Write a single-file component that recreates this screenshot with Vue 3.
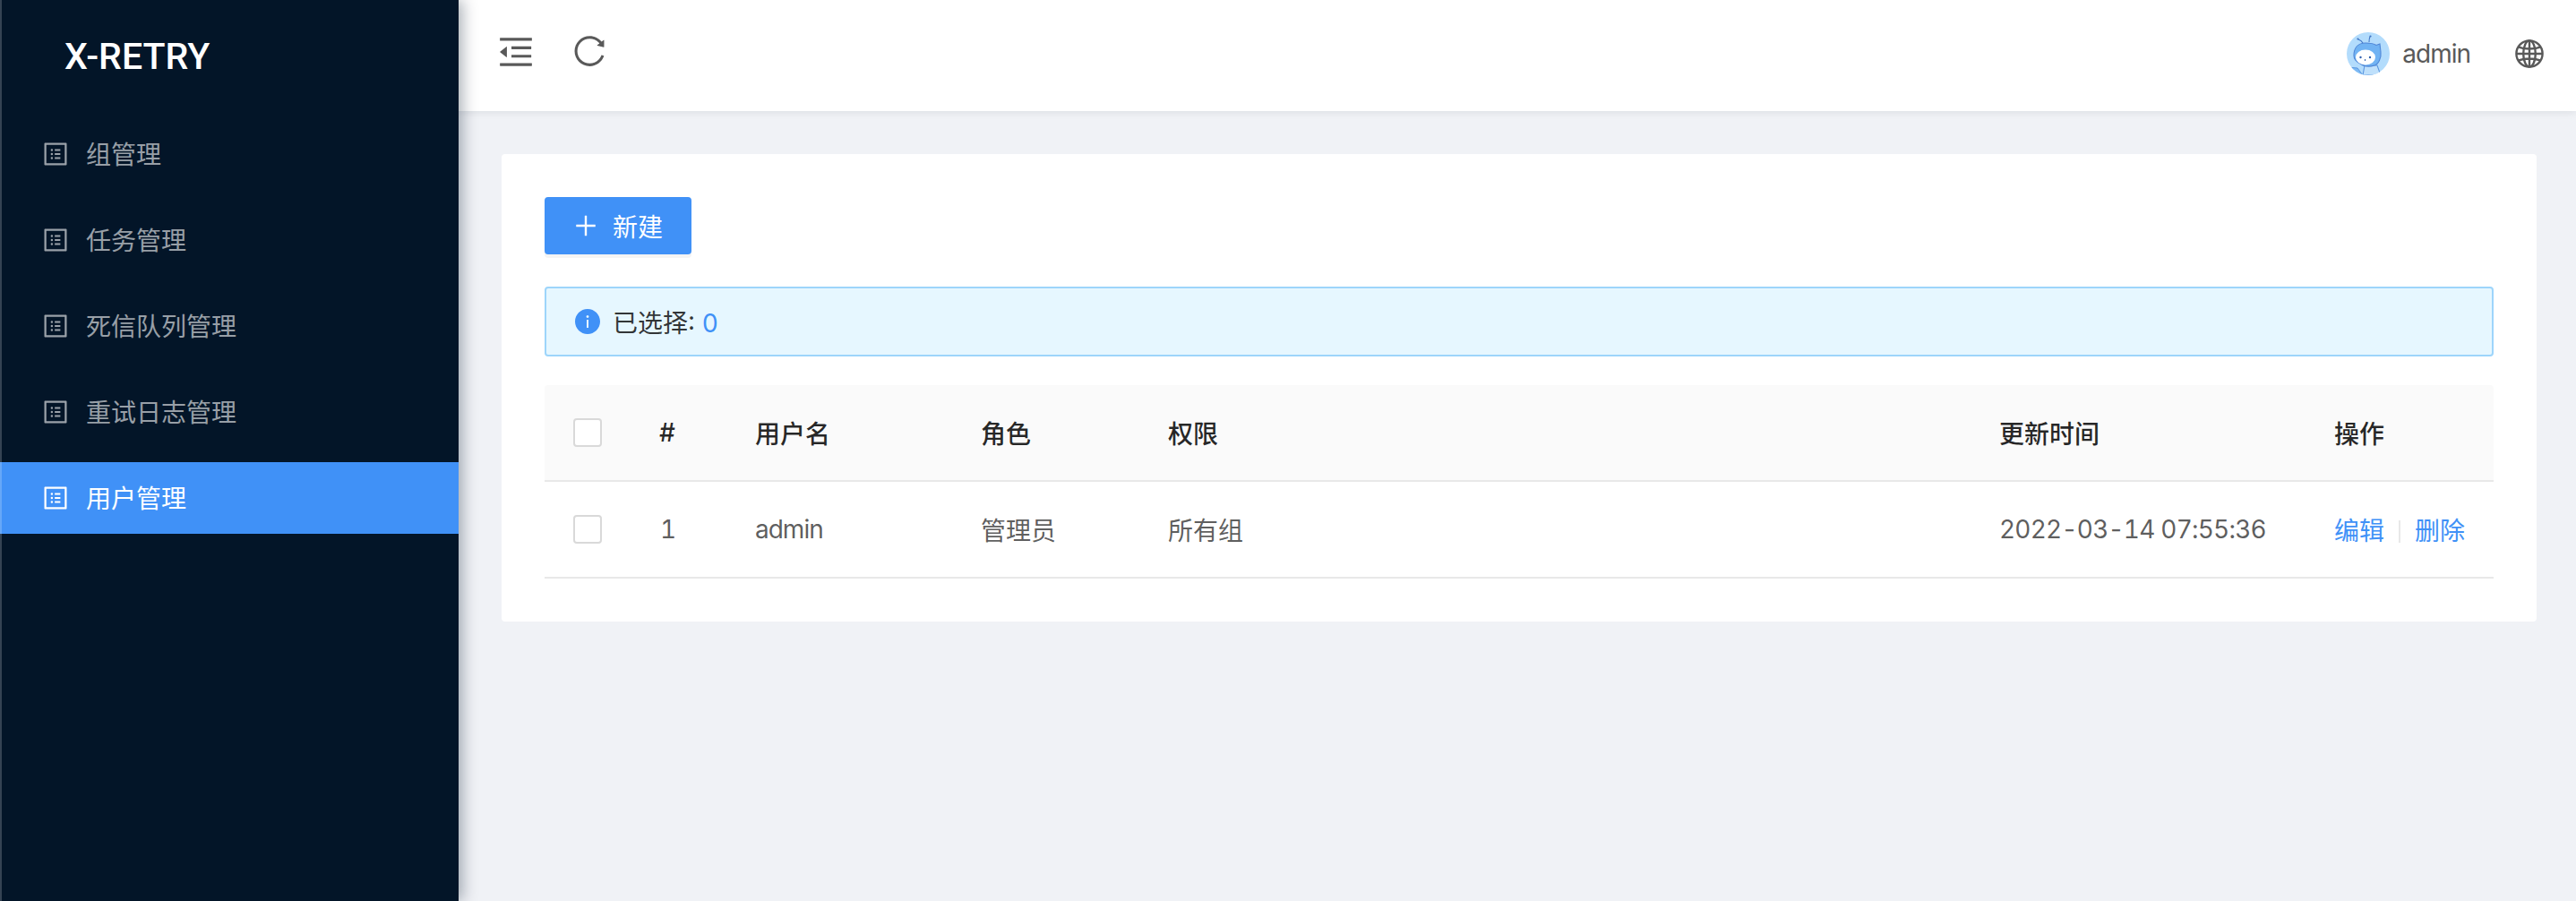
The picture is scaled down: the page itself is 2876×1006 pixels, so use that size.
<script setup>
const menus = ['组管理', '任务管理', '死信队列管理', '重试日志管理', '用户管理']
const activeIndex = 4
const profilePath = 'M880 112H144c-17.7 0-32 14.3-32 32v736c0 17.7 14.3 32 32 32h736c17.7 0 32-14.3 32-32V144c0-17.7-14.3-32-32-32zm-40 728H184V184h656v656zM492 400h184c4.4 0 8-3.6 8-8v-48c0-4.4-3.6-8-8-8H492c-4.4 0-8 3.6-8 8v48c0 4.4 3.6 8 8 8zm0 144h184c4.4 0 8-3.6 8-8v-48c0-4.4-3.6-8-8-8H492c-4.4 0-8 3.6-8 8v48c0 4.4 3.6 8 8 8zm0 144h184c4.4 0 8-3.6 8-8v-48c0-4.4-3.6-8-8-8H492c-4.4 0-8 3.6-8 8v48c0 4.4 3.6 8 8 8zM340 368a40 40 0 1 0 80 0 40 40 0 1 0-80 0zm0 144a40 40 0 1 0 80 0 40 40 0 1 0-80 0zm0 144a40 40 0 1 0 80 0 40 40 0 1 0-80 0z'
</script>

<template>
  <div class="layout">
    <aside class="sider">
      <div class="logo">X-RETRY</div>
      <ul class="menu">
        <li v-for="(m, i) in menus" :key="m" class="menu-item" :class="{ active: i === activeIndex }">
          <svg class="menu-icon" viewBox="64 64 896 896" fill="currentColor"><path :d="profilePath" /></svg>
          <span>{{ m }}</span>
        </li>
      </ul>
    </aside>

    <div class="main">
      <header class="header">
        <div class="tools">
          <svg class="fold" viewBox="64 64 896 896" fill="currentColor"><path d="M408 442h480c4.4 0 8-3.6 8-8v-56c0-4.4-3.6-8-8-8H408c-4.4 0-8 3.6-8 8v56c0 4.4 3.6 8 8 8zm-8 204c0 4.4 3.6 8 8 8h480c4.4 0 8-3.6 8-8v-56c0-4.4-3.6-8-8-8H408c-4.4 0-8 3.6-8 8v56zm504-486H120c-4.4 0-8 3.6-8 8v56c0 4.4 3.6 8 8 8h784c4.4 0 8-3.6 8-8v-56c0-4.4-3.6-8-8-8zm0 632H120c-4.4 0-8 3.6-8 8v56c0 4.4 3.6 8 8 8h784c4.4 0 8-3.6 8-8v-56c0-4.4-3.6-8-8-8zM115.4 518.9L271.7 642c5.8 4.6 14.4.5 14.4-6.9V388.9c0-7.4-8.5-11.5-14.4-6.9L115.4 505.1a8.74 8.74 0 0 0 0 13.8z" /></svg>
          <svg class="reload" viewBox="64 64 896 896" fill="currentColor"><path d="M909.1 209.3l-56.4 44.1C775.8 155.1 656.2 92 521.9 92 290 92 102.3 279.5 102 511.5 101.7 743.7 289.8 932 521.9 932c181.3 0 335.8-115 394.6-276.1 1.5-4.2-.7-8.9-4.9-10.3l-56.7-19.5a8 8 0 0 0-10.1 4.8c-1.8 5-3.8 10-5.9 14.9-17.3 41-42.1 77.8-73.7 109.4A344.77 344.77 0 0 1 655.9 829c-42.3 17.9-87.4 27-133.8 27-46.5 0-91.5-9.1-133.8-27A341.5 341.5 0 0 1 279 755.2a342.16 342.16 0 0 1-73.7-109.4c-17.9-42.4-27-87.4-27-133.9s9.1-91.5 27-133.9c17.3-41 42.1-77.8 73.7-109.4 31.6-31.6 68.4-56.4 109.3-73.8 42.3-17.9 87.4-27 133.8-27 46.5 0 91.5 9.1 133.8 27a341.5 341.5 0 0 1 109.3 73.8c9.9 9.9 19.2 20.4 27.8 31.4l-60.2 47a8 8 0 0 0 3 14.1l175.6 43c5 1.2 9.9-2.6 9.9-7.7l.8-180.9c-.1-6.6-7.8-10.3-13-6.2z" /></svg>
        </div>
        <div class="user">
          <svg class="avatar" viewBox="0 0 48 48">
            <defs><clipPath id="av"><circle cx="24" cy="24" r="24" /></clipPath></defs>
            <g clip-path="url(#av)">
              <rect width="48" height="48" fill="#b3dcfc" />
              <path d="M0 39l12 1 6 8H0z" fill="#7dbaf4" stroke="#5c97e0" stroke-width="1" />
              <path d="M20 37h14l4 11H18z" fill="#bfe0fb" stroke="#5c97e0" stroke-width="1.1" />
              <path d="M8 26c0-9 5-14 13-14 5 0 9 .5 12 2.500l4-1.500 1 9c1 7-3 14-7 15-6 2-12 1-16-2-4-2-7-4-7-9z" fill="#71b3f3" stroke="#4f86d6" stroke-width="1.1" />
              <path d="M18 12c-1-2-2-3-5-4M25 11c0-3 0-4 1-6" stroke="#3f74c4" stroke-width="1.1" fill="none" />
              <circle cx="12.500" cy="7.500" r="1.100" fill="#3f74c4" />
              <circle cx="26.500" cy="4.500" r="1.100" fill="#3f74c4" />
              <ellipse cx="21" cy="28" rx="11" ry="8.500" fill="#fff" />
              <circle cx="15.500" cy="28" r="1.200" fill="#2f5fae" />
              <circle cx="26" cy="28" r="1.200" fill="#2f5fae" />
              <path d="M20.500 30v2" stroke="#2f5fae" stroke-width="1" />
            </g>
          </svg>
          <span class="user-name">admin</span>
          <svg class="globe" viewBox="0 0 32 32" fill="none" stroke="currentColor" stroke-width="2.400">
            <circle cx="16" cy="16" r="14.600" />
            <ellipse cx="16" cy="16" rx="6.800" ry="14.600" />
            <path d="M16 1.400v29.200M1.400 16h29.200M4 8.600c7 2.600 17 2.600 24 0M4 23.400c7-2.600 17-2.600 24 0" />
          </svg>
        </div>
      </header>

      <main class="content">
        <section class="card">
          <button class="btn-primary" type="button">
            <svg class="plus" viewBox="64 64 896 896" fill="currentColor"><path d="M482 152h60q8 0 8 8v704q0 8-8 8h-60q-8 0-8-8V160q0-8 8-8z" /><path d="M176 474h672q8 0 8 8v60q0 8-8 8H176q-8 0-8-8v-60q0-8 8-8z" /></svg>
            <span>新建</span>
          </button>

          <div class="alert">
            <svg class="info" viewBox="64 64 896 896" fill="#4091f7"><path d="M512 64C264.6 64 64 264.6 64 512s200.6 448 448 448 448-200.6 448-448S759.4 64 512 64zm32 664c0 4.4-3.6 8-8 8h-48c-4.4 0-8-3.6-8-8V456c0-4.4 3.6-8 8-8h48c4.4 0 8 3.6 8 8v272zm-32-344a48.01 48.01 0 0 1 0-96 48.01 48.01 0 0 1 0 96z" /></svg>
            <span>已选择: <a class="count">0</a></span>
          </div>

          <table class="table">
            <colgroup>
              <col class="c-check" /><col class="c-num" /><col class="c-name" /><col class="c-role" /><col class="c-perm" /><col class="c-time" /><col class="c-act" />
            </colgroup>
            <thead>
              <tr>
                <th><span class="checkbox"></span></th>
                <th>#</th>
                <th>用户名</th>
                <th>角色</th>
                <th>权限</th>
                <th>更新时间</th>
                <th>操作</th>
              </tr>
            </thead>
            <tbody>
              <tr>
                <td><span class="checkbox"></span></td>
                <td class="tnum">1</td>
                <td class="latin">admin</td>
                <td>管理员</td>
                <td>所有组</td>
                <td class="date">2022-03-14 07:55:36</td>
                <td class="actions"><a>编辑</a><i class="divider"></i><a>删除</a></td>
              </tr>
            </tbody>
          </table>
        </section>
      </main>
    </div>
  </div>
</template>

<style>
html, body { margin: 0; background: #f0f2f6; }
</style>

<style scoped>
.layout {
  display: flex;
  min-height: 1006px;
  font-family: Inter, "Noto Sans CJK SC", sans-serif;
  font-size: 28px;
  color: rgba(0, 0, 0, 0.65);
}
.sider {
  position: relative;
  z-index: 2;
  flex: 0 0 512px;
  background: #031528;
  box-shadow: 4px 0 16px rgba(0, 21, 41, 0.35);
}
.sider::before {
  content: "";
  position: absolute;
  top: 0;
  bottom: 0;
  left: 0;
  width: 2px;
  background: rgba(255, 255, 255, 0.2);
}
.logo {
  height: 128px;
  box-sizing: border-box;
  padding: 39px 0 0 72px;
  font-family: Roboto, sans-serif;
  font-size: 41px;
  line-height: 48px;
  font-weight: 500;
  color: #fff;
}
.menu { list-style: none; margin: 0; padding: 4px 0 0; }
.menu-item {
  display: flex;
  align-items: center;
  height: 80px;
  margin-bottom: 16px;
  padding-left: 48px;
  color: rgba(255, 255, 255, 0.6);
}
.menu-item span { position: relative; top: -1px; }
.menu-item.active { background: #4091f7; color: #fff; }
.menu-icon { width: 28px; height: 28px; margin-right: 20px; }

.main { flex: 1; min-width: 0; }
.header {
  position: relative;
  z-index: 1;
  display: flex;
  align-items: flex-start;
  justify-content: space-between;
  height: 124px;
  background: #fff;
  box-shadow: 0 2px 8px rgba(0, 21, 41, 0.08);
  color: #595959;
}
.tools { display: flex; align-items: center; gap: 44px; margin: 38px 0 0 44px; }
.fold { width: 40px; height: 40px; }
.reload { width: 36px; height: 36px; margin-top: -3px; }
.user { display: flex; align-items: center; margin: 36px 36px 0 0; }
.avatar { width: 48px; height: 48px; }
.user-name { margin-left: 14px; letter-spacing: -1px; }
.globe { width: 32px; height: 32px; margin-left: 50px; }

.content { padding: 48px 44px 48px 48px; }
.card { padding: 48px; border-radius: 4px; background: #fff; }
.btn-primary {
  display: flex;
  align-items: center;
  gap: 16px;
  height: 64px;
  width: 164px;
  box-sizing: border-box;
  padding: 0 30px;
  border: 2px solid #4091f7;
  border-radius: 4px;
  background: #4091f7;
  box-shadow: 0 4px 0 rgba(0, 0, 0, 0.045);
  color: #fff;
  font: inherit;
}
.plus { width: 28px; height: 28px; }
.alert {
  display: flex;
  align-items: center;
  gap: 14px;
  height: 78px;
  box-sizing: border-box;
  margin: 36px 0 32px;
  padding: 0 32px;
  border: 2px solid #9dd5fb;
  border-radius: 4px;
  background: #e6f7ff;
  color: rgba(0, 0, 0, 0.8);
}
.info { width: 28px; height: 28px; }
.count { color: #4091f7; }

.table { width: 100%; border-collapse: separate; border-spacing: 0; table-layout: fixed; }
.c-check { width: 96px; }
.c-num { width: 108px; }
.c-name { width: 252px; }
.c-role { width: 209px; }
.c-perm { width: 928px; }
.c-time { width: 374px; }
.c-act { width: 209px; }
.table th, .table td {
  height: 108px;
  box-sizing: border-box;
  padding: 0 32px 0 31px;
  border-bottom: 2px solid #e8e8e8;
  text-align: left;
}
.table th:first-child, .table td:first-child { padding-left: 32px; }
.table th:nth-child(2) { padding-left: 32px; }
.table td.tnum { padding-left: 33px; font-variant-numeric: tabular-nums; }
.table th { background: #fafafa; color: rgba(0, 0, 0, 0.85); font-weight: 500; }
.table th:first-child { border-top-left-radius: 4px; }
.table th:last-child { border-top-right-radius: 4px; }
.checkbox {
  display: block;
  width: 32px;
  height: 32px;
  box-sizing: border-box;
  border: 2px solid #d9d9d9;
  border-radius: 4px;
  background: #fff;
}
.latin { letter-spacing: -1px; }
.date { white-space: nowrap; font-feature-settings: "tnum" 1; letter-spacing: -0.8px; }
.actions { white-space: nowrap; }
.actions a { color: #4091f7; }
.divider { display: inline-block; width: 2px; height: 25px; margin: 0 16px; background: #e8e8e8; vertical-align: -3px; }
</style>
